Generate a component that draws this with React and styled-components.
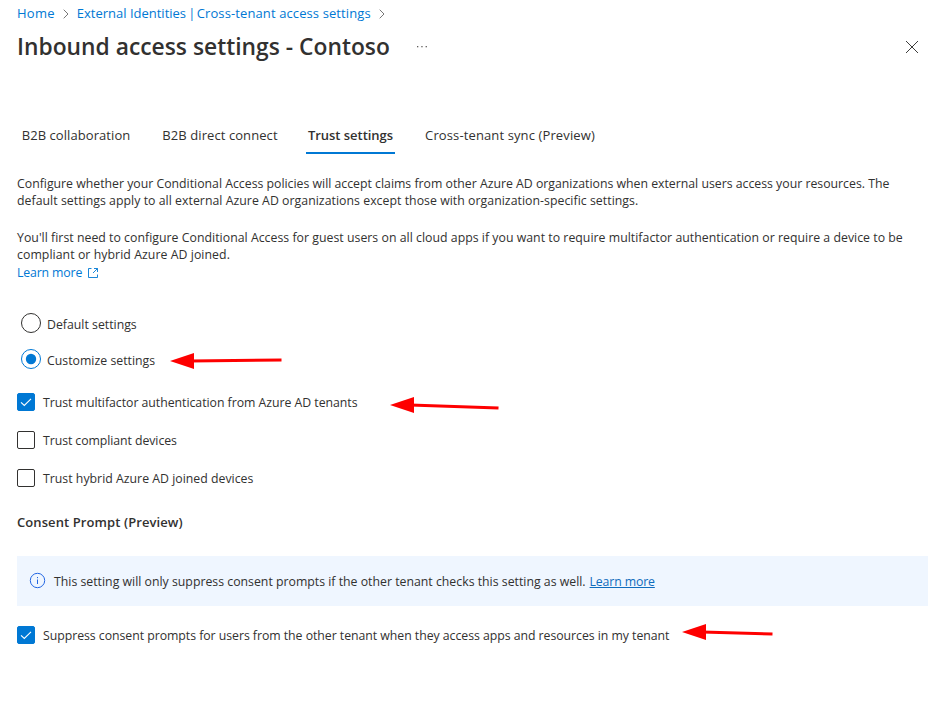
import React from 'react';
import styled, { createGlobalStyle } from 'styled-components';

const Global = createGlobalStyle`
  *, *::before, *::after { box-sizing: border-box; }
  body { margin: 0; background: #fff; }
`;

const Page = styled.main`
  position: relative;
  width: 939px;
  height: 726px;
  padding: 0 11px 0 17px;
  overflow: hidden;
  background: #fff;
  color: #323130;
  font-family: "Open Sans", "Segoe UI", sans-serif;
  font-size: 12.3px;
  line-height: 17px;
`;

const Text = styled.span`
  letter-spacing: ${(p) => p.$track || 0}px;
  white-space: nowrap;
`;

const Link = styled.a`
  color: ${(p) => (p.$underline ? '#0f6cbd' : '#0078d4')};
  letter-spacing: ${(p) => p.$track || 0}px;
  text-decoration: ${(p) => (p.$underline ? 'underline' : 'none')};
  text-underline-offset: 1px;
  white-space: nowrap;
`;

const Breadcrumb = styled.nav`
  display: flex;
  align-items: center;
  height: 27px;
  font-size: 13px;
`;

const Pipe = styled.span`
  letter-spacing: -1.1px;
`;

const Chevron = styled.svg`
  width: 6px;
  height: 10px;
  margin: 1px 8px 0;
  fill: none;
  stroke: #777;
`;

const Header = styled.header`
  display: flex;
  align-items: center;
  height: 39px;
`;

const Title = styled.h1`
  width: 399px;
  margin: 0;
  font-size: 22.8px;
  font-weight: 600;
  line-height: 39px;
  letter-spacing: 0.01px;
  white-space: nowrap;
`;

const MoreDots = styled.svg`
  width: 12px;
  height: 4px;
  fill: #605e5c;
`;

const CloseIcon = styled.svg`
  width: 14px;
  height: 14px;
  margin: 1px 9px 0 auto;
  fill: none;
  stroke: #323130;
  stroke-width: 0.95;
`;

const Tabs = styled.div`
  display: flex;
  gap: 28px;
  margin: 54px 0 21px 1px;
  font-size: 13px;
`;

const Tab = styled.div`
  display: flex;
  align-items: center;
  justify-content: center;
  width: ${(p) => p.$width}px;
  height: 34px;
  padding-bottom: ${(p) => (p.$active ? 1 : 3)}px;
  border-bottom: ${(p) => (p.$active ? '2px solid #0078d4' : 'none')};
  font-weight: ${(p) => (p.$active ? 600 : 400)};
`;

const Paragraph = styled.p`
  display: flex;
  flex-direction: column;
  margin: 0 0 ${(p) => p.$gap || 0}px;
`;

const LearnMore = styled.div`
  display: flex;
  align-items: center;
  gap: 6px;
  height: 18px;
  padding-top: 1px;
`;

const ExternalIcon = styled.svg`
  width: 10px;
  height: 10px;
  fill: none;
  stroke: #0078d4;
  stroke-width: 0.9;
`;

const RadioGroup = styled.div`
  display: flex;
  flex-direction: column;
  gap: 16px;
  margin: 32px 0 0 4px;
`;

const Choice = styled.label`
  display: flex;
  align-items: center;
  gap: ${(p) => p.$gap}px;
  height: 20px;

  & > span { padding-top: ${(p) => p.$drop}px; }
`;

const RadioDot = styled.svg`
  flex: none;
  width: 20px;
  height: 20px;
  color: ${(p) => (p.$checked ? '#0078d4' : '#323130')};
  fill: none;
  stroke: currentColor;
`;

const CheckGroup = styled.div`
  display: flex;
  flex-direction: column;
  gap: 18px;
  margin-top: ${(p) => p.$top}px;
`;

const CheckBox = styled.svg`
  flex: none;
  width: 18px;
  height: 18px;
  border: 1px solid ${(p) => (p.$checked ? '#0078d4' : '#323130')};
  border-radius: 2px;
  background: ${(p) => (p.$checked ? '#0078d4' : '#fff')};
  fill: none;
  stroke: #fff;
  stroke-width: 1.1;
`;

const SectionTitle = styled.h2`
  margin: 25px 0;
  font-size: 13px;
  font-weight: 600;
  line-height: 18px;
  letter-spacing: 0.09px;
`;

const InfoBar = styled.div`
  display: flex;
  align-items: center;
  height: 50px;
  padding-left: 12px;
  background: #eff6ff;
`;

const InfoIcon = styled.svg`
  width: 17px;
  height: 17px;
  margin: 0 8px 1px 0;
  fill: none;
  stroke: #2266e3;
`;

const InfoText = styled.span`
  margin-right: 4px;
  white-space: nowrap;
`;

const ArrowLayer = styled.svg`
  position: absolute;
  inset: 0;
  pointer-events: none;
  fill: #fe0000;
  stroke: #fe0000;
`;

const arrows = [
  { tip: [170, 361], tail: [281.5, 360] },
  { tip: [390, 405], tail: [498.5, 408] },
  { tip: [682, 632], tail: [772.5, 634] },
];

const tabs = [
  { label: 'B2B collaboration', width: 116, track: 0.07 },
  { label: 'B2B direct connect', width: 116, track: 0.08 },
  { label: 'Trust settings', width: 89, track: -0.04, active: true },
  { label: 'Cross-tenant sync (Preview)', width: 174, track: 0.12 },
];

const trustOptions = [
  { label: 'Trust multifactor authentication from Azure AD tenants', track: -0.035, checked: true },
  { label: 'Trust compliant devices', track: -0.07 },
  { label: 'Trust hybrid Azure AD joined devices', track: 0.01 },
];

function Checkbox({ label, track, checked }) {
  return (
    <Choice $gap={8} $drop={0}>
      <CheckBox viewBox="0 0 16 16" $checked={checked}>
        {checked && <path d="M3 8.3 6.3 11.5 13 4.8" />}
      </CheckBox>
      <Text $track={track}>{label}</Text>
    </Choice>
  );
}

function Radio({ label, track, checked }) {
  return (
    <Choice $gap={6} $drop={2}>
      <RadioDot viewBox="0 0 20 20" $checked={checked}>
        <circle cx="10" cy="10" r="9.5" />
        {checked && <circle cx="10" cy="10" r="5.2" fill="currentColor" stroke="none" />}
      </RadioDot>
      <Text $track={track}>{label}</Text>
    </Choice>
  );
}

function Separator() {
  return (
    <Chevron viewBox="0 0 6 10">
      <path d="M.7 .7 5 5 .7 9.3" />
    </Chevron>
  );
}

export default function App() {
  return (
    <Page>
      <Global />
      <Breadcrumb>
        <Link $track={0.25}>Home</Link>
        <Separator />
        <Link>
          External Identities<Pipe> | </Pipe><Text $track={0.11}>Cross-tenant access settings</Text>
        </Link>
        <Separator />
      </Breadcrumb>
      <Header>
        <Title>Inbound access settings - Contoso</Title>
        <MoreDots viewBox="0 0 12 4">
          <rect x="1" y="1" width="1.3" height="1.3" />
          <rect x="5.3" y="1" width="1.3" height="1.3" />
          <rect x="9.6" y="1" width="1.3" height="1.3" />
        </MoreDots>
        <CloseIcon viewBox="0 0 14 14">
          <path d="M1 1 13 13M13 1 1 13" />
        </CloseIcon>
      </Header>
      <Tabs>
        {tabs.map((t) => (
          <Tab key={t.label} $width={t.width} $active={t.active}>
            <Text $track={t.track}>{t.label}</Text>
          </Tab>
        ))}
      </Tabs>
      <Paragraph $gap={20}>
        <Text $track={-0.008}>Configure whether your Conditional Access policies will accept claims from other Azure AD organizations when external users access your resources. The</Text>
        <Text $track={0.033}>default settings apply to all external Azure AD organizations except those with organization-specific settings.</Text>
      </Paragraph>
      <Paragraph>
        <Text $track={0.022}>You'll first need to configure Conditional Access for guest users on all cloud apps if you want to require multifactor authentication or require a device to be</Text>
        <Text $track={0.055}>compliant or hybrid Azure AD joined.</Text>
      </Paragraph>
      <LearnMore>
        <Link $track={-0.15}>Learn more</Link>
        <ExternalIcon viewBox="0 0 10 10">
          <path d="M3.5 .5H.5V9.5H9.5V6.5M6 .5H9.5V4M9.5 .5 5 5" />
        </ExternalIcon>
      </LearnMore>
      <RadioGroup>
        <Radio label="Default settings" track={0} />
        <Radio label="Customize settings" track={0.01} checked />
      </RadioGroup>
      <CheckGroup $top={23}>
        {trustOptions.map((o) => <Checkbox key={o.label} {...o} />)}
      </CheckGroup>
      <SectionTitle>Consent Prompt (Preview)</SectionTitle>
      <InfoBar>
        <InfoIcon viewBox="0 0 17 17">
          <circle cx="8.5" cy="8.5" r="7.2" />
          <path d="M8.5 7.5V12M8.5 5V6.2" />
        </InfoIcon>
        <InfoText>This setting will only suppress consent prompts if the other tenant checks this setting as well.</InfoText>
        <Link $underline $track={-0.14}>Learn more</Link>
      </InfoBar>
      <CheckGroup $top={19}>
        <Checkbox
          checked
          track={-0.042}
          label="Suppress consent prompts for users from the other tenant when they access apps and resources in my tenant"
        />
      </CheckGroup>
      <ArrowLayer width="939" height="726" viewBox="0 0 939 726">
        {arrows.map(({ tip: [x, y], tail }) => (
          <g key={y}>
            <path d={`M${x + 20} ${y}L${tail[0]} ${tail[1]}`} strokeWidth="3" />
            <path d={`M${x} ${y}L${x + 24} ${y - 8}V${y + 8}Z`} stroke="none" />
          </g>
        ))}
      </ArrowLayer>
    </Page>
  );
}
